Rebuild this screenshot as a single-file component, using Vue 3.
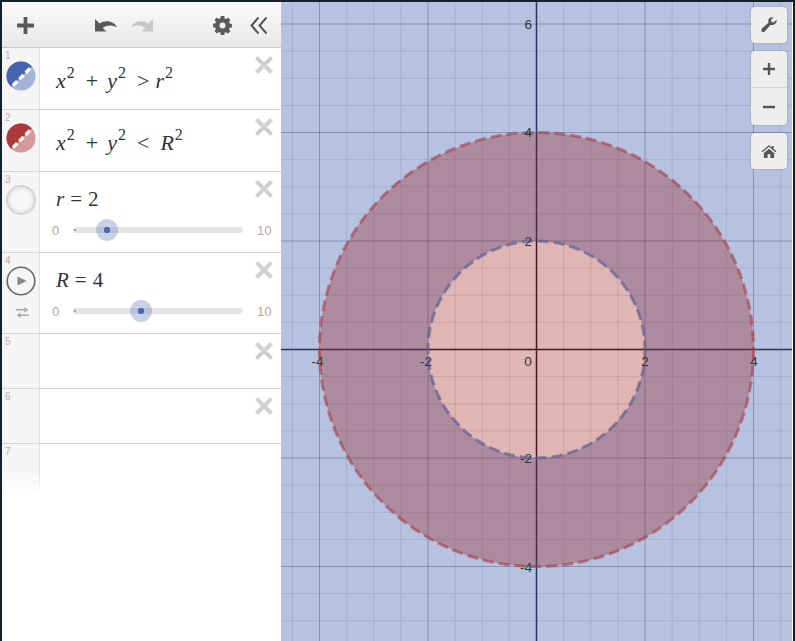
<script setup>
const ox = 536.5, oy = 349.5, unit = 54.25
const minorX = [], majorX = [], minorY = [], majorY = []
for (let i = -14; i <= 14; i++) {
  const x = ox + i * unit / 2
  const y = oy + i * unit / 2
  if (i === 0) continue
  if (i % 4 === 0) { majorX.push(x); majorY.push(y) } else { minorX.push(x); minorY.push(y) }
}
const xLabels = [
  { t: '-4', x: 317.5, y: 366 }, { t: '-2', x: 426, y: 366 }, { t: '0', x: 528, y: 366 },
  { t: '2', x: 645, y: 366 }, { t: '4', x: 754, y: 366 }
]
const yLabels = [
  { t: '6', y: 29 }, { t: '4', y: 137 }, { t: '2', y: 246 }, { t: '-2', y: 463 }, { t: '-4', y: 572 }
]
const rows = [
  { n: 1, h: 'h62' }, { n: 2, h: 'h62' }, { n: 3, h: 'h81' },
  { n: 4, h: 'h81' }, { n: 5, h: 'h55' }, { n: 6, h: 'h55' }
]
</script>

<template>
  <div class="app">
    <aside class="panel">
      <header class="toolbar">
        <svg class="ico plus" viewBox="0 0 18 18"><path d="M7 0h4v7h7v4h-7v7H7v-7H0V7h7z"/></svg>
        <div class="history">
          <svg class="ico undo" viewBox="0 0 22 14"><path d="M0 1v12.500h11.500L7.600 10C11 7.200 16.500 6.600 22 9.200 18.800 3.200 10.600 1.500 4.600 5.600z"/></svg>
          <svg class="ico redo" viewBox="0 0 22 14"><path d="M22 1v12.500H10.500L14.400 10C11 7.200 5.500 6.600 0 9.200 3.200 3.200 11.400 1.500 17.400 5.600z"/></svg>
        </div>
        <svg class="ico gear" viewBox="0 0 20 20"><path fill-rule="evenodd" d="M8 0h4l.5 2.800 1.700.7 2.300-1.600 2.800 2.800-1.600 2.300.7 1.700 2.600.5v4l-2.600.5-.7 1.700 1.600 2.300-2.800 2.800-2.300-1.600-1.700.7L12 22H8l-.5-2.600-1.700-.7-2.300 1.600-2.800-2.800 1.600-2.300-.7-1.700L-1 13V9l2.600-.5.7-1.700-1.600-2.300 2.800-2.800 2.300 1.600 1.700-.7zM10 7.500a3.500 3.500 0 1 0 0 7 3.500 3.500 0 0 0 0-7z" transform="translate(1 .1) scale(.9)"/></svg>
        <svg class="ico collapse" viewBox="0 0 18 17"><path d="M8.500.5 1.500 8.500l7 8M16.500.5l-7 8 7 8" fill="none" stroke="#555" stroke-width="2"/></svg>
      </header>

      <div class="list">
        <div v-for="row in rows" :key="row.n" class="row" :class="row.h">
          <div class="gutter">
            <span class="num">{{ row.n }}</span>
            <svg v-if="row.n < 3" class="swatch" viewBox="0 0 30 30">
              <defs>
                <clipPath :id="'sw' + row.n"><circle cx="15" cy="15" r="14.500"/></clipPath>
              </defs>
              <g :clip-path="`url(#sw${row.n})`">
                <rect width="30" height="30" :fill="row.n === 1 ? '#a4b3d8' : '#d49a9a'"/>
                <path d="M-2 33 33 -2H-2z" :fill="row.n === 1 ? '#4464b0' : '#ad3a3a'"/>
                <path d="M7 24.500 24.500 7" stroke="#fff" stroke-width="3.500" stroke-dasharray="6 3"/>
              </g>
            </svg>
            <div v-else-if="row.n === 3" class="ring"></div>
            <template v-else-if="row.n === 4">
              <svg class="play" viewBox="0 0 30 30">
                <circle cx="15" cy="15" r="13.800" fill="none" stroke="#666" stroke-width="1.600"/>
                <path d="M11.500 10.500v9l9-4.500z" fill="#888"/>
              </svg>
              <svg class="loop" viewBox="0 0 16 12">
                <path d="M1 3h10M15 9H5" fill="none" stroke="#aaa" stroke-width="1.600"/>
                <path d="M10 0l4.500 3L10 6zM6 6 1.500 9 6 12z" fill="#aaa"/>
              </svg>
            </template>
          </div>
          <div class="body">
            <div v-if="row.n === 1" class="math">
              <i>x</i><sup>2</sup><span class="bin">+</span><i>y</i><sup>2</sup><span class="rel tight">&gt;</span><i>r</i><sup>2</sup>
            </div>
            <div v-else-if="row.n === 2" class="math">
              <i>x</i><sup>2</sup><span class="bin">+</span><i>y</i><sup>2</sup><span class="rel">&lt;</span><i>R</i><sup>2</sup>
            </div>
            <template v-else-if="row.n === 3">
              <div class="math slim"><i>r</i><span class="eq">=</span>2</div>
              <div class="slider">
                <span class="limit">0</span>
                <div class="track"><span class="knob k2"></span></div>
                <span class="limit">10</span>
              </div>
            </template>
            <template v-else-if="row.n === 4">
              <div class="math slim"><i>R</i><span class="eq">=</span>4</div>
              <div class="slider">
                <span class="limit">0</span>
                <div class="track"><span class="knob k4"></span></div>
                <span class="limit">10</span>
              </div>
            </template>
          </div>
          <svg class="close" viewBox="0 0 18 18"><path d="M1.500 1.500l15 15M16.500 1.500l-15 15" stroke="#d0d0d0" stroke-width="4.200" fill="none"/></svg>
        </div>
        <div class="row last">
          <div class="gutter fade"><span class="num">7</span></div>
        </div>
      </div>
    </aside>

    <main class="graph">
      <svg class="plot" width="511" height="639" viewBox="281 2 511 639">
        <rect x="281" y="2" width="511" height="639" fill="#fff"/>
        <g stroke="#000" stroke-opacity=".11" stroke-width="1">
          <path v-for="x in minorX" :key="'a' + x" :d="`M${x} 0V641`"/>
          <path v-for="y in minorY" :key="'b' + y" :d="`M281 ${y}H795`"/>
        </g>
        <g stroke="#000" stroke-opacity=".3" stroke-width="1">
          <path v-for="x in majorX" :key="'c' + x" :d="`M${x} 0V641`"/>
          <path v-for="y in majorY" :key="'d' + y" :d="`M281 ${y}H795`"/>
        </g>
        <path d="M536.500 0V641M281 349.500H795" stroke="#1c1c2c" stroke-width="1.500"/>
        <path fill="#3f5fae" fill-opacity=".38" fill-rule="evenodd"
          d="M281 0H795V641H281zM536.500 241a108.500 108.500 0 1 0 0 217 108.500 108.500 0 1 0 0-217z"/>
        <circle cx="536.500" cy="349.500" r="217" fill="#970c05" fill-opacity=".3"/>
        <circle cx="536.500" cy="349.500" r="108.500" fill="none" stroke="#5f5f98" stroke-opacity=".7" stroke-width="3" stroke-dasharray="11 5"/>
        <circle cx="536.500" cy="349.500" r="217" fill="none" stroke="#a83a44" stroke-opacity=".6" stroke-width="3" stroke-dasharray="11 5"/>
        <text v-for="l in xLabels" :key="l.t" class="tick" :x="l.x" :y="l.y" text-anchor="middle">{{ l.t }}</text>
        <text v-for="l in yLabels" :key="'y' + l.t" class="tick" x="532" :y="l.y" text-anchor="end">{{ l.t }}</text>
      </svg>

      <div class="controls">
        <button class="tool wrench">
          <svg viewBox="0 0 18 18"><path d="M17.500 3.200 14.400 6l-2.600-.5-.6-2.500L14.200.5C11.500-.6 8.200 1 8.200 4.200c0 .8.1 1.300.3 1.900L1.200 13c-1 1-1 2.400-.2 3.300.9.900 2.300.8 3.200-.1l6.700-7.400c.7.2 1.300.3 2 .2 3.400-.3 5.300-3 4.600-5.800z" fill="#555"/></svg>
        </button>
        <div class="tool zoom">
          <button class="half"><svg viewBox="0 0 12 12"><path d="M4.800 0h2.400v4.800H12v2.400H7.200V12H4.800V7.200H0V4.800h4.800z" fill="#555"/></svg></button>
          <button class="half"><svg viewBox="0 0 12 12"><path d="M0 4.800h12v2.400H0z" fill="#555"/></svg></button>
        </div>
        <button class="tool home">
          <svg viewBox="0 0 16 14"><path d="M8 0 0 6.800l1 1L8 2l7 5.800 1-1-3-2.500V1h-2v1.800zM2.500 8.500V14H6.500V10h3v4h4V8.500L8 4z" fill="#555"/></svg>
        </button>
      </div>
    </main>
  </div>
</template>

<style>
html, body { margin: 0; background: #fff; }
</style>

<style scoped>
.app {
  width: 795px;
  height: 641px;
  box-sizing: border-box;
  border-top: 2px solid #14202a;
  border-left: 2px solid #14202a;
  border-right: 2px solid #14202a;
  display: flex;
  overflow: hidden;
  font-family: "Liberation Sans", Arial, sans-serif;
  background: #fff;
}
.panel {
  width: 279px;
  flex: none;
  display: flex;
  flex-direction: column;
  background: #fff;
}
.toolbar {
  height: 46px;
  flex: none;
  box-sizing: border-box;
  border-bottom: 1px solid #c8c8c8;
  background: linear-gradient(#fafafa, #e9e9e9);
  display: flex;
  align-items: center;
  padding: 2px 0 0 15px;
}
.ico { display: block; fill: #5a5a5a; }
.plus { width: 17px; height: 17px; }
.history { display: flex; gap: 14px; margin-left: 61px; margin-top: -2px; }
.undo, .redo { width: 22px; height: 14px; }
.redo { fill: #c8c8c8; }
.gear { width: 19px; height: 19px; margin-left: 60px; }
.collapse { width: 18px; height: 17px; margin-left: 18px; }

.row {
  display: flex;
  box-sizing: border-box;
  border-bottom: 1px solid #d4d4d4;
  position: relative;
}
.h62 { height: 62px; }
.h81 { height: 81px; }
.h55 { height: 55px; }
.last { border-bottom: 0; height: 50px; }
.gutter {
  width: 38px;
  flex: none;
  box-sizing: border-box;
  background: #f5f5f5;
  border-right: 1px solid #e2e2e2;
  position: relative;
}
.gutter.fade {
  background: linear-gradient(#f5f5f5 50%, #fff);
  border-right-color: transparent;
  border-image: linear-gradient(#e2e2e2 50%, #fff) 1;
}
.num {
  position: absolute;
  left: 3px;
  top: 2px;
  font-size: 10px;
  line-height: 11px;
  color: #b4b4b4;
}
.swatch, .ring, .play {
  position: absolute;
  left: 3.500px;
  top: 13px;
  width: 30px;
  height: 30px;
}
.ring {
  box-sizing: border-box;
  border-radius: 50%;
  border: 2px solid #d4d4d4;
  background: #f7f7f7;
  box-shadow: inset 0 0 3px 2px #e4e4e4;
}
.loop { position: absolute; left: 13px; top: 54px; width: 15px; height: 11px; }

.body { flex: 1; padding-left: 16px; }
.math {
  font-family: "Liberation Serif", "Times New Roman", serif;
  font-size: 22px;
  line-height: 24px;
  color: #333;
  padding-top: 21px;
  white-space: nowrap;
}
.math.slim { padding-top: 15px; font-size: 21px; }
.math i { font-style: italic; }
.math sup { font-size: 16px; line-height: 0; vertical-align: 10px; margin-left: 1px; }
.bin { margin: 0 9px 0 11px; }
.rel { margin: 0 11px 0 11px; }
.rel.tight { margin-right: 6px; }
.eq { margin: 0 6px; }

.slider { display: flex; align-items: center; margin-top: 9px; margin-left: -4px; height: 20px; }
.limit { font-size: 13px; color: #aaa; width: 14px; text-align: left; flex: none; }
.limit:last-child { margin-left: 14px; }
.track {
  width: 170px;
  height: 6px;
  margin-left: 7px;
  flex: none;
  border-radius: 3px;
  background: #e4e4e4;
  position: relative;
}
.track::before {
  content: "";
  position: absolute;
  left: 1px;
  top: 2px;
  width: 2px;
  height: 2px;
  border-radius: 50%;
  background: #888;
}
.knob {
  position: absolute;
  top: 50%;
  width: 22px;
  height: 22px;
  margin: -11px 0 0 -11px;
  border-radius: 50%;
  background: radial-gradient(circle, #5268ae 0 3px, rgba(95, 125, 190, .35) 3.500px);
}
.k2 { left: 34px; }
.k4 { left: 68px; }
.close { position: absolute; right: 8px; top: 8px; width: 18px; height: 18px; }

.graph { flex: 1; position: relative; overflow: hidden; border-right: 1px solid #fff; }
.plot { display: block; }
.tick {
  font-family: "Liberation Sans", Arial, sans-serif;
  font-size: 13.500px;
  fill: #333;
}
.controls {
  position: absolute;
  top: 5px;
  right: 5px;
  width: 36px;
  display: flex;
  flex-direction: column;
  gap: 8px;
}
.tool {
  box-sizing: border-box;
  width: 36px;
  padding: 0;
  border: 0;
  border-radius: 4px;
  background: #eeeeee;
  box-shadow: 0 0 2px rgba(0, 0, 0, .25);
  display: flex;
  align-items: center;
  justify-content: center;
}
.wrench, .home { height: 36px; }
.wrench svg { width: 16px; height: 16px; }
.home svg { width: 16px; height: 13px; }
.zoom { flex-direction: column; height: 74px; }
.half {
  width: 36px;
  height: 37px;
  padding: 0;
  border: 0;
  background: none;
  display: flex;
  align-items: center;
  justify-content: center;
}
.half:first-child { border-bottom: 1px solid #d4d4d4; }
.half svg { width: 12px; height: 12px; }
</style>
